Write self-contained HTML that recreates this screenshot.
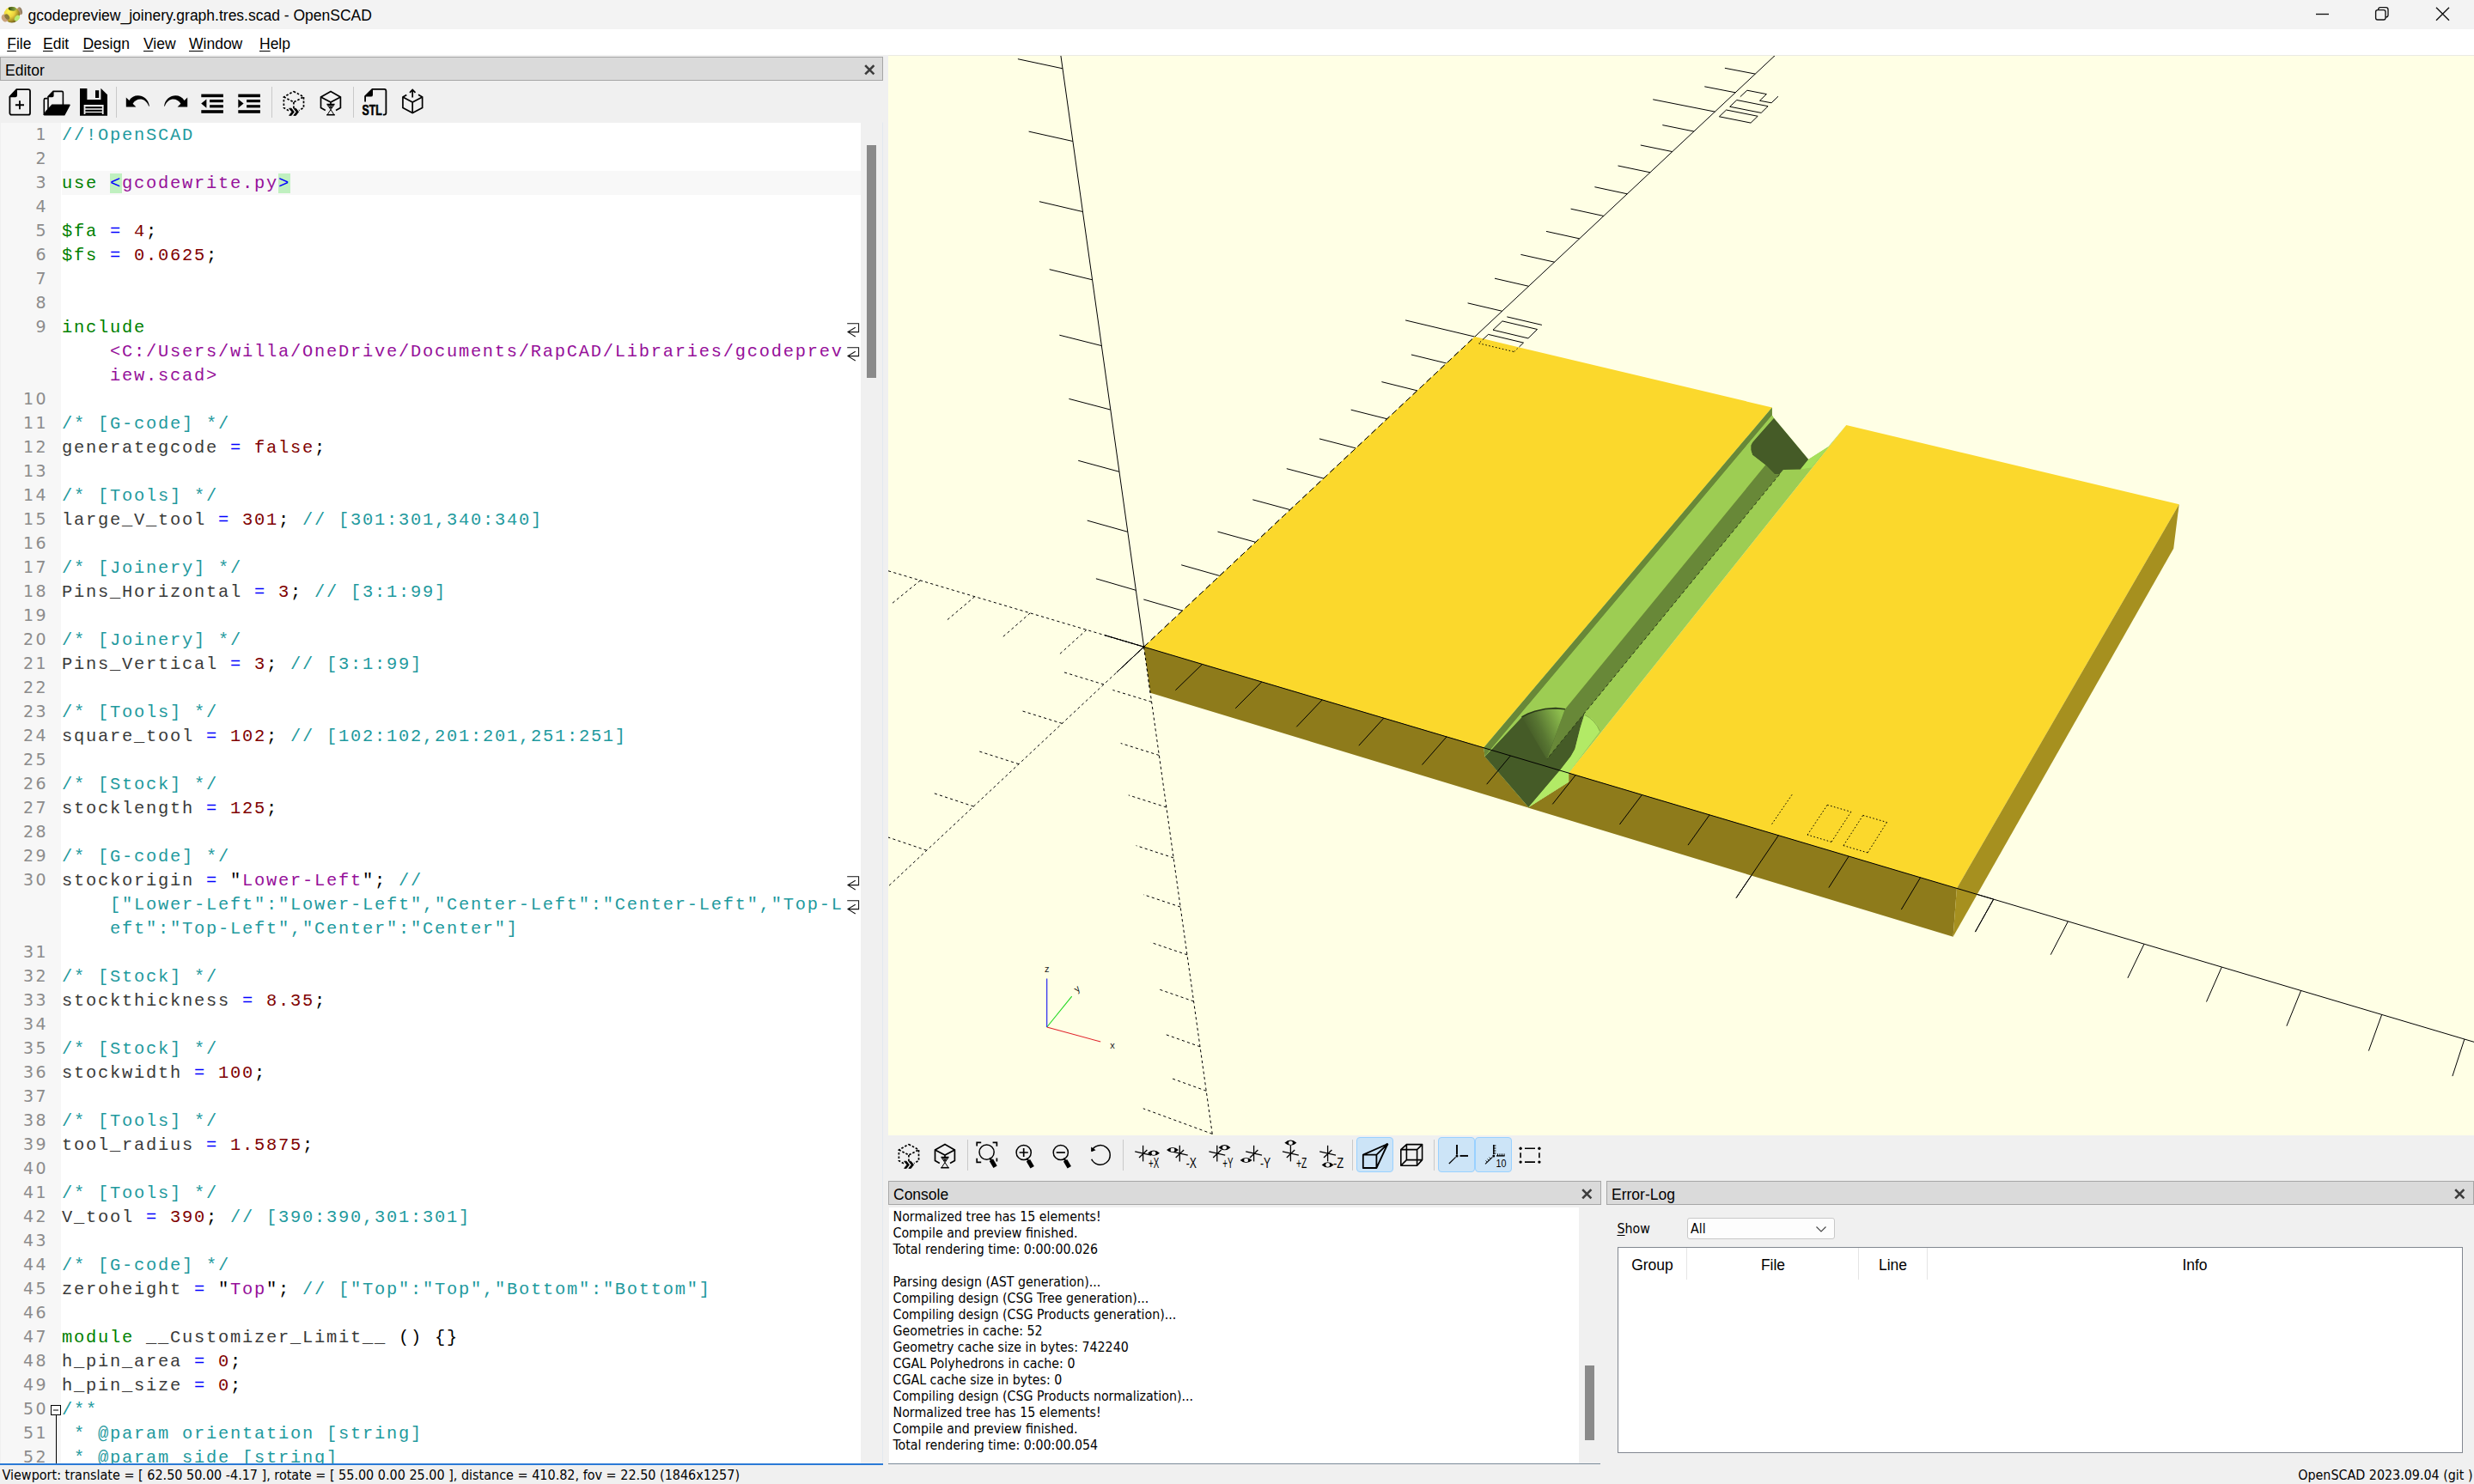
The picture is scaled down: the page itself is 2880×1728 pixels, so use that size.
<!DOCTYPE html><html><head><meta charset="utf-8"><title>gcodepreview_joinery.graph.tres.scad - OpenSCAD</title><style>
*{box-sizing:border-box;margin:0;padding:0}
html,body{width:2880px;height:1728px;overflow:hidden;background:#f0f0f0}
body{position:relative;font-family:"Liberation Sans",sans-serif;color:#000}
.abs{position:absolute}
.ui{font-family:"Liberation Sans",sans-serif;font-size:17.5px;line-height:22px;white-space:pre;color:#000}
.tah{font-family:"DejaVu Sans Condensed","DejaVu Sans","Liberation Sans",sans-serif;font-stretch:condensed;font-size:15.8px;white-space:pre;color:#000}
#title{left:0;top:0;width:2880px;height:34px;background:#f3f3f3}
#menu{left:0;top:34px;width:2880px;height:30px;background:#fff}
.dockt{background:#dadada;border:1px solid #a6a6a6;height:28px}
.dockt span{position:absolute;top:4px;font-size:17.5px;line-height:22px}
u{text-decoration:underline;text-underline-offset:2px;text-decoration-thickness:1px}
#ed{left:1px;top:143px;width:1001px;height:1561px;background:#fff;overflow:hidden}
#mg{left:0;top:0;width:70px;height:1561px;background:#f7f7f7}
.ln{position:absolute;left:0;width:55px;margin-top:-0.8px;letter-spacing:2.5px;transform:scaleX(0.94);transform-origin:52.5px 50%;text-align:right;height:28px;line-height:28px;font-family:"DejaVu Sans","Liberation Sans",sans-serif;font-size:20.2px;color:#8c8c8c}
.cl{position:absolute;left:71px;height:28px;line-height:28px;font-family:"Liberation Mono",monospace;font-size:20.4px;letter-spacing:1.76px;margin-top:0.6px;white-space:pre;color:#3a3a3a}
.c{color:#1f9a9e}.k{color:#008000}.p{color:#96109a}.n{color:#800000}.o{color:#0000ff}.d{color:#000}
.hl{background:#c0f0c0}
.con{left:1039.5px;height:19px;line-height:19px}
</style></head><body>
<div id="title" class="abs"><svg class="abs" style="left:0.0px;top:4.0px" width="28" height="26" viewBox="0 0 28 26" ><defs><radialGradient id="lg" cx="0.32" cy="0.3" r="0.85"><stop offset="0" stop-color="#fff74e"/><stop offset="0.42" stop-color="#ecd23e"/><stop offset="0.72" stop-color="#a38c26"/><stop offset="1" stop-color="#4a3e0c"/></radialGradient>
<linearGradient id="lh" x1="0" x2="1"><stop offset="0" stop-color="#33480f"/><stop offset="1" stop-color="#8fae48"/></linearGradient>
<linearGradient id="lt" x1="0" x2="1"><stop offset="0" stop-color="#d2a878"/><stop offset="1" stop-color="#857560"/></linearGradient></defs>
<ellipse cx="23.1" cy="8.8" rx="2.7" ry="4.6" fill="url(#lt)" transform="rotate(-18 23.1 8.8)"/>
<ellipse cx="13.8" cy="13.1" rx="9.2" ry="9.4" fill="url(#lg)"/>
<ellipse cx="14.3" cy="6.3" rx="4.6" ry="2.3" fill="url(#lh)" transform="rotate(6 14.3 6.3)"/>
<ellipse cx="19.9" cy="17" rx="2.6" ry="3.9" fill="#b9ea70" transform="rotate(38 19.9 17)"/>
<ellipse cx="5.6" cy="17" rx="3.7" ry="4.6" fill="#c9a27c" transform="rotate(-30 5.6 17)"/>
<ellipse cx="8.3" cy="15.6" rx="2.5" ry="3.6" fill="#8a7a3c" transform="rotate(-35 8.3 15.6)"/></svg><span class="abs ui" style="left:32.5px;top:7px">gcodepreview_joinery.graph.tres.scad - OpenSCAD</span><svg class="abs" style="left:2680px;top:0" width="200" height="34" viewBox="2680 0 200 34"><g fill="none" stroke="#111" stroke-width="1.35"><path d="M2696 16.5H2711"/><rect x="2765.6" y="11.6" width="11.4" height="11.4" rx="2.2"/><path d="M2768.6 11.4V11a2.4 2.4 0 0 1 2.4-2.4h6.4a2.6 2.6 0 0 1 2.6 2.6v6.4a2.4 2.4 0 0 1-2.4 2.4h-0.4"/><path d="M2836 8.8L2851 23.8M2851 8.8L2836 23.8"/></g></svg></div>
<div id="menu" class="abs">
<span class="abs ui" style="left:8.2px;top:6px"><u>F</u>ile</span>
<span class="abs ui" style="left:50.0px;top:6px"><u>E</u>dit</span>
<span class="abs ui" style="left:96.4px;top:6px"><u>D</u>esign</span>
<span class="abs ui" style="left:167.0px;top:6px"><u>V</u>iew</span>
<span class="abs ui" style="left:220.0px;top:6px"><u>W</u>indow</span>
<span class="abs ui" style="left:302.0px;top:6px"><u>H</u>elp</span>
</div>
<div class="abs dockt" style="left:0;top:66px;width:1028px"><span class="ui" style="left:5px">Editor</span><svg class="abs" style="left:1005px;top:8px" width="13" height="13" viewBox="0 0 13 13"><path d="M1.2 1.2L11.4 11.4M11.4 1.2L1.2 11.4" stroke="#3c3c3c" stroke-width="2.6" fill="none"/></svg></div>
<svg class="abs" style="left:7.0px;top:103.0px" width="32" height="32" viewBox="0 0 32 32" ><path d="M12.3 1.2H26a2 2 0 0 1 2 2V28.7a2 2 0 0 1-2 2H6.4a2 2 0 0 1-2-2V9.6Z" fill="none" stroke="#000" stroke-width="1.8"/><path d="M3.6 10.2L13 0.4V8a2.2 2.2 0 0 1-2.2 2.2Z" fill="#000"/><path d="M10.9 19.2H21M15.95 14.2V24.3" stroke="#000" stroke-width="1.9" fill="none"/></svg>
<svg class="abs" style="left:49.7px;top:103.0px" width="32" height="32" viewBox="0 0 32 32" ><path d="M1.3 31V13.2a1.6 1.6 0 0 1 1.6-1.6H5.5" fill="none" stroke="#000" stroke-width="1.6"/><path d="M6 27V9.6L12 3.4H22a1.4 1.4 0 0 1 1.4 1.4V19" fill="none" stroke="#000" stroke-width="1.6"/><path d="M5.4 10.2L12.6 2.8V8.4a1.8 1.8 0 0 1-1.8 1.8Z" fill="#000"/><path d="M10.4 18.4H30.8a0.9 0.9 0 0 1 0.8 1.3L25.6 31a1 1 0 0 1-0.9 0.5H1.6a0.8 0.8 0 0 1-0.7-1.2L3 26.5Z" fill="#000"/></svg>
<svg class="abs" style="left:93.0px;top:103.0px" width="32" height="32" viewBox="0 0 32 32" ><path d="M0 0H24.6L32 7.2V31.8H0Z" fill="#000"/><rect x="8.4" y="0" width="16" height="13" fill="#f0f0f0"/><rect x="18" y="2.2" width="4.2" height="8.8" fill="#000"/><rect x="4.6" y="19" width="23" height="11" fill="#f0f0f0"/><rect x="6.4" y="21.2" width="19.4" height="2" fill="#000"/><rect x="6.4" y="24.8" width="19.4" height="2" fill="#000"/><rect x="6.4" y="28.2" width="19.4" height="2" fill="#000"/></svg>
<svg class="abs" style="left:145.0px;top:103.0px" width="32" height="32" viewBox="0 0 32 32" ><path d="M1.8 10.6V21.4H13.4L9.6 17.8C13.5 10.6 24.5 10 28.2 20.8L28.9 20.4C26.8 6.4 10.6 4.6 5.4 14Z" fill="#000"/></svg>
<svg class="abs" style="left:187.6px;top:103.0px" width="32" height="32" viewBox="0 0 32 32" ><g transform="translate(32 0) scale(-1 1)"><path d="M1.8 10.6V21.4H13.4L9.6 17.8C13.5 10.6 24.5 10 28.2 20.8L28.9 20.4C26.8 6.4 10.6 4.6 5.4 14Z" fill="#000"/></g></svg>
<svg class="abs" style="left:230.8px;top:103.0px" width="32" height="32" viewBox="0 0 32 32" ><rect x="3.3" y="6.6" width="25.6" height="3.6" fill="#000"/><rect x="13.1" y="13" width="15.799999999999999" height="3.2" fill="#000"/><rect x="13.1" y="19.2" width="15.799999999999999" height="3.2" fill="#000"/><rect x="3.3" y="25.2" width="25.6" height="3.6" fill="#000"/><path d="M3.2 17.6L9.4 12.4V22.8Z" fill="#000"/></svg>
<svg class="abs" style="left:274.0px;top:103.0px" width="32" height="32" viewBox="0 0 32 32" ><rect x="3.3" y="6.6" width="25.6" height="3.6" fill="#000"/><rect x="13.1" y="13" width="15.799999999999999" height="3.2" fill="#000"/><rect x="13.1" y="19.2" width="15.799999999999999" height="3.2" fill="#000"/><rect x="3.3" y="25.2" width="25.6" height="3.6" fill="#000"/><path d="M9.6 17.6L3.3 12.4V22.8Z" fill="#000"/></svg>
<svg class="abs" style="left:326.0px;top:103.0px" width="32" height="32" viewBox="0 0 32 32" ><g fill="none" stroke="#000" stroke-width="1.7" stroke-dasharray="2.6 1.9"><path d="M15.9 3.4L27.5 9.9V22.5L22 25.6M10 25.8L4.4 22.5V9.9L15.9 3.4"/><path d="M4.4 9.9L15.9 16L27.5 9.9M15.9 16V24"/></g><path d="M10.6 23.2H13.2L16.4 27.3L13.2 31.4H10.6L13.8 27.3ZM15.8 23.2H18.4L21.6 27.3L18.4 31.4H15.8L19 27.3Z" fill="#000" stroke="#000" stroke-width="0.8"/></svg>
<svg class="abs" style="left:369.0px;top:103.0px" width="32" height="32" viewBox="0 0 32 32" ><g fill="none" stroke="#000" stroke-width="1.7"><path d="M9.8 25.6L4.5 22.5V9.9L16 3.4L27.4 9.9V22.5L22 25.6"/><path d="M4.5 9.9L16 16L27.4 9.9M16 16V18.4"/></g><path d="M11.4 18.6H20.6M11.2 30.8H20.8" stroke="#000" stroke-width="1.5"/><path d="M12.4 19.6H19.6L16 24.6ZM16 24.6L19.8 30.4H12.2Z" fill="none" stroke="#000" stroke-width="1"/><path d="M13.6 20.4H18.4L16 23.6Z" fill="#000"/></svg>
<svg class="abs" style="left:419.7px;top:103.0px" width="32" height="32" viewBox="0 0 32 32" ><path d="M5.1 15.4V9.2L13.4 0.9H27.4a2 2 0 0 1 2 2V28.6a2 2 0 0 1-2 2H25.8" fill="none" stroke="#000" stroke-width="1.8"/><path d="M4.6 9.6L14 0.4V7.4a2.2 2.2 0 0 1-2.2 2.2Z" fill="#000"/><text x="1.6" y="31.2" font-family="Liberation Sans, sans-serif" font-weight="bold" font-size="16" textLength="23.2" lengthAdjust="spacingAndGlyphs" fill="#000" stroke="#000" stroke-width="0.55">STL</text></svg>
<svg class="abs" style="left:464.5px;top:103.0px" width="32" height="32" viewBox="0 0 32 32" ><g fill="none" stroke="#000" stroke-width="1.7"><path d="M8.3 7.4L3.95 9.9V22.5L15.2 28.6L26.65 22.5V9.9L22 7.3"/><path d="M3.95 9.9L15.2 16L26.65 9.9M15.2 16V28.6"/><path d="M15.2 10.6V1.6M12 4.8L15.2 1.4L18.5 4.8"/></g></svg>
<div class="abs" style="left:135.1px;top:101px;width:1px;height:36px;background:#c9c9c9"></div>
<div class="abs" style="left:316.0px;top:101px;width:1px;height:36px;background:#c9c9c9"></div>
<div class="abs" style="left:410.9px;top:101px;width:1px;height:36px;background:#c9c9c9"></div>
<div class="abs" style="left:0;top:142px;width:1028px;height:1563px;border:1px solid #e3e9ef;border-top-color:#f0f0f0;border-left-color:#f0f0f0"></div>
<div id="ed" class="abs"><div id="mg" class="abs"></div>
<div class="abs" style="left:71px;top:56px;width:930px;height:28px;background:#f8f8f8"></div>
<div class="ln" style="top:0px">1</div>
<div class="cl" style="top:0px"><span class="c">//!OpenSCAD</span></div>
<div class="ln" style="top:28px">2</div>
<div class="ln" style="top:56px">3</div>
<div class="cl" style="top:56px"><span class="k">use</span> <span class="o hl">&lt;</span><span class="p">gcodewrite.py</span><span class="o hl">&gt;</span></div>
<div class="ln" style="top:84px">4</div>
<div class="ln" style="top:112px">5</div>
<div class="cl" style="top:112px"><span class="k">$fa</span> <span class="o">=</span> <span class="n">4</span><span class="d">;</span></div>
<div class="ln" style="top:140px">6</div>
<div class="cl" style="top:140px"><span class="k">$fs</span> <span class="o">=</span> <span class="n">0.0625</span><span class="d">;</span></div>
<div class="ln" style="top:168px">7</div>
<div class="ln" style="top:196px">8</div>
<div class="ln" style="top:224px">9</div>
<div class="cl" style="top:224px"><span class="k">include</span></div>
<svg class="abs" style="left:984px;top:233px" width="16" height="18" viewBox="0 0 16 18"><path d="M1.2 0.8H14.6V10.6H2.2M10.8 5.3L2 10.6L10.8 16" fill="none" stroke="#111" stroke-width="1.05"/></svg>
<div class="cl" style="top:252px"><span class="p">    &lt;C:/Users/willa/OneDrive/Documents/RapCAD/Libraries/gcodeprev</span></div>
<svg class="abs" style="left:984px;top:261px" width="16" height="18" viewBox="0 0 16 18"><path d="M1.2 0.8H14.6V10.6H2.2M10.8 5.3L2 10.6L10.8 16" fill="none" stroke="#111" stroke-width="1.05"/></svg>
<div class="cl" style="top:280px"><span class="p">    iew.scad&gt;</span></div>
<div class="ln" style="top:308px">10</div>
<div class="ln" style="top:336px">11</div>
<div class="cl" style="top:336px"><span class="c">/* [G-code] */</span></div>
<div class="ln" style="top:364px">12</div>
<div class="cl" style="top:364px">generategcode <span class="o">=</span> <span class="n">false</span><span class="d">;</span></div>
<div class="ln" style="top:392px">13</div>
<div class="ln" style="top:420px">14</div>
<div class="cl" style="top:420px"><span class="c">/* [Tools] */</span></div>
<div class="ln" style="top:448px">15</div>
<div class="cl" style="top:448px">large_V_tool <span class="o">=</span> <span class="n">301</span><span class="d">;</span> <span class="c">// [301:301,340:340]</span></div>
<div class="ln" style="top:476px">16</div>
<div class="ln" style="top:504px">17</div>
<div class="cl" style="top:504px"><span class="c">/* [Joinery] */</span></div>
<div class="ln" style="top:532px">18</div>
<div class="cl" style="top:532px">Pins_Horizontal <span class="o">=</span> <span class="n">3</span><span class="d">;</span> <span class="c">// [3:1:99]</span></div>
<div class="ln" style="top:560px">19</div>
<div class="ln" style="top:588px">20</div>
<div class="cl" style="top:588px"><span class="c">/* [Joinery] */</span></div>
<div class="ln" style="top:616px">21</div>
<div class="cl" style="top:616px">Pins_Vertical <span class="o">=</span> <span class="n">3</span><span class="d">;</span> <span class="c">// [3:1:99]</span></div>
<div class="ln" style="top:644px">22</div>
<div class="ln" style="top:672px">23</div>
<div class="cl" style="top:672px"><span class="c">/* [Tools] */</span></div>
<div class="ln" style="top:700px">24</div>
<div class="cl" style="top:700px">square_tool <span class="o">=</span> <span class="n">102</span><span class="d">;</span> <span class="c">// [102:102,201:201,251:251]</span></div>
<div class="ln" style="top:728px">25</div>
<div class="ln" style="top:756px">26</div>
<div class="cl" style="top:756px"><span class="c">/* [Stock] */</span></div>
<div class="ln" style="top:784px">27</div>
<div class="cl" style="top:784px">stocklength <span class="o">=</span> <span class="n">125</span><span class="d">;</span></div>
<div class="ln" style="top:812px">28</div>
<div class="ln" style="top:840px">29</div>
<div class="cl" style="top:840px"><span class="c">/* [G-code] */</span></div>
<div class="ln" style="top:868px">30</div>
<div class="cl" style="top:868px">stockorigin <span class="o">=</span> <span class="d">"</span><span class="p">Lower-Left</span><span class="d">";</span> <span class="c">//</span></div>
<svg class="abs" style="left:984px;top:877px" width="16" height="18" viewBox="0 0 16 18"><path d="M1.2 0.8H14.6V10.6H2.2M10.8 5.3L2 10.6L10.8 16" fill="none" stroke="#111" stroke-width="1.05"/></svg>
<div class="cl" style="top:896px"><span class="c">    ["Lower-Left":"Lower-Left","Center-Left":"Center-Left","Top-L</span></div>
<svg class="abs" style="left:984px;top:905px" width="16" height="18" viewBox="0 0 16 18"><path d="M1.2 0.8H14.6V10.6H2.2M10.8 5.3L2 10.6L10.8 16" fill="none" stroke="#111" stroke-width="1.05"/></svg>
<div class="cl" style="top:924px"><span class="c">    eft":"Top-Left","Center":"Center"]</span></div>
<div class="ln" style="top:952px">31</div>
<div class="ln" style="top:980px">32</div>
<div class="cl" style="top:980px"><span class="c">/* [Stock] */</span></div>
<div class="ln" style="top:1008px">33</div>
<div class="cl" style="top:1008px">stockthickness <span class="o">=</span> <span class="n">8.35</span><span class="d">;</span></div>
<div class="ln" style="top:1036px">34</div>
<div class="ln" style="top:1064px">35</div>
<div class="cl" style="top:1064px"><span class="c">/* [Stock] */</span></div>
<div class="ln" style="top:1092px">36</div>
<div class="cl" style="top:1092px">stockwidth <span class="o">=</span> <span class="n">100</span><span class="d">;</span></div>
<div class="ln" style="top:1120px">37</div>
<div class="ln" style="top:1148px">38</div>
<div class="cl" style="top:1148px"><span class="c">/* [Tools] */</span></div>
<div class="ln" style="top:1176px">39</div>
<div class="cl" style="top:1176px">tool_radius <span class="o">=</span> <span class="n">1.5875</span><span class="d">;</span></div>
<div class="ln" style="top:1204px">40</div>
<div class="ln" style="top:1232px">41</div>
<div class="cl" style="top:1232px"><span class="c">/* [Tools] */</span></div>
<div class="ln" style="top:1260px">42</div>
<div class="cl" style="top:1260px">V_tool <span class="o">=</span> <span class="n">390</span><span class="d">;</span> <span class="c">// [390:390,301:301]</span></div>
<div class="ln" style="top:1288px">43</div>
<div class="ln" style="top:1316px">44</div>
<div class="cl" style="top:1316px"><span class="c">/* [G-code] */</span></div>
<div class="ln" style="top:1344px">45</div>
<div class="cl" style="top:1344px">zeroheight <span class="o">=</span> <span class="d">"</span><span class="p">Top</span><span class="d">";</span> <span class="c">// ["Top":"Top","Bottom":"Bottom"]</span></div>
<div class="ln" style="top:1372px">46</div>
<div class="ln" style="top:1400px">47</div>
<div class="cl" style="top:1400px"><span class="k">module</span> __Customizer_Limit__ <span class="d">() {}</span></div>
<div class="ln" style="top:1428px">48</div>
<div class="cl" style="top:1428px">h_pin_area <span class="o">=</span> <span class="n">0</span><span class="d">;</span></div>
<div class="ln" style="top:1456px">49</div>
<div class="cl" style="top:1456px">h_pin_size <span class="o">=</span> <span class="n">0</span><span class="d">;</span></div>
<div class="ln" style="top:1484px">50</div>
<div class="cl" style="top:1484px"><span class="c">/**</span></div>
<div class="ln" style="top:1512px">51</div>
<div class="cl" style="top:1512px"><span class="c"> * @param orientation [string]</span></div>
<div class="ln" style="top:1540px">52</div>
<div class="cl" style="top:1540px"><span class="c"> * @param side [string]</span></div>
<div class="abs" style="left:64px;top:1505px;width:1px;height:120px;background:#000"></div>
<svg class="abs" style="left:58px;top:1493px" width="13" height="13" viewBox="0 0 13 13"><rect x="0.5" y="0.5" width="11" height="11" fill="#fff" stroke="#000" stroke-width="1"/><path d="M3 6H9" stroke="#000" stroke-width="1"/></svg>
</div>
<div class="abs" style="left:1002px;top:143px;width:25px;height:1561px;background:#f0f0f0"></div>
<div class="abs" style="left:1009px;top:169px;width:11px;height:271px;background:#8a8a8a"></div>
<div class="abs" style="left:0;top:1704px;width:1028px;height:1.5px;background:#2a7ad6"></div>
<div class="abs" style="left:1034px;top:64px;width:1846px;height:1px;background:#e9e9e4"></div>
<svg width="1846" height="1257" viewBox="1034 65 1846 1257" style="position:absolute;left:1034px;top:65px;background:#ffffe5" shape-rendering="auto">
<defs><linearGradient id="cone" gradientUnits="userSpaceOnUse" x1="1782" y1="860" x2="1822" y2="842"><stop offset="0" stop-color="#455b27"/><stop offset="0.35" stop-color="#587632"/><stop offset="1" stop-color="#8dbd4d"/></linearGradient></defs>
<g stroke="#000" stroke-width="1" fill="none" stroke-linecap="butt">
<line x1="1331.6" y1="753.2" x2="5669.0" y2="2042.1"/>
<line x1="1331.6" y1="753.2" x2="1716.8" y2="392.1" stroke-dasharray="7 4"/>
<line x1="1716.8" y1="392.1" x2="2390.9" y2="-239.7"/>
<line x1="1331.6" y1="753.2" x2="1230.9" y2="36.3"/>
<line x1="1331.6" y1="753.2" x2="-700.5" y2="149.4" stroke-dasharray="3.2 3.2"/>
<line x1="1331.6" y1="753.2" x2="-7074.6" y2="8632.5" stroke-dasharray="3.2 3.2"/>
<line x1="1331.6" y1="753.2" x2="1414.7" y2="1345.0" stroke-dasharray="3.2 3.2"/>
<line x1="1331.6" y1="753.2" x2="1299.8" y2="783.0"/>
<line x1="1331.6" y1="753.2" x2="1285.8" y2="739.6"/>
<line x1="1331.6" y1="753.2" x2="1285.8" y2="739.6"/>
<line x1="1399.6" y1="773.4" x2="1368.4" y2="803.7"/>
<line x1="1376.6" y1="711.1" x2="1331.3" y2="698.0"/>
<line x1="1322.3" y1="687.3" x2="1275.9" y2="673.8"/>
<line x1="1264.8" y1="733.4" x2="1232.5" y2="762.6" stroke-dasharray="3.2 3.2"/>
<line x1="1284.9" y1="797.0" x2="1238.5" y2="782.8" stroke-dasharray="3.2 3.2"/>
<line x1="1340.6" y1="817.3" x2="1295.4" y2="803.5" stroke-dasharray="3.2 3.2"/>
<line x1="1468.8" y1="794.0" x2="1438.2" y2="824.8"/>
<line x1="1419.9" y1="670.5" x2="1375.2" y2="657.8"/>
<line x1="1312.8" y1="619.3" x2="1265.7" y2="606.1"/>
<line x1="1199.2" y1="713.9" x2="1166.3" y2="742.6" stroke-dasharray="3.2 3.2"/>
<line x1="1236.4" y1="842.4" x2="1189.4" y2="827.7" stroke-dasharray="3.2 3.2"/>
<line x1="1349.3" y1="879.5" x2="1304.7" y2="865.5" stroke-dasharray="3.2 3.2"/>
<line x1="1539.2" y1="814.9" x2="1509.3" y2="846.3"/>
<line x1="1461.6" y1="631.3" x2="1417.5" y2="619.1"/>
<line x1="1303.0" y1="549.3" x2="1255.2" y2="536.3"/>
<line x1="1134.7" y1="694.7" x2="1101.3" y2="723.0" stroke-dasharray="3.2 3.2"/>
<line x1="1186.0" y1="889.7" x2="1138.3" y2="874.4" stroke-dasharray="3.2 3.2"/>
<line x1="1357.8" y1="940.0" x2="1313.8" y2="925.9" stroke-dasharray="3.2 3.2"/>
<line x1="1610.9" y1="836.2" x2="1581.8" y2="868.2"/>
<line x1="1501.9" y1="593.6" x2="1458.3" y2="581.8"/>
<line x1="1292.8" y1="477.1" x2="1244.4" y2="464.4"/>
<line x1="1071.3" y1="675.9" x2="1037.3" y2="703.6" stroke-dasharray="3.2 3.2"/>
<line x1="1133.4" y1="939.0" x2="1085.1" y2="923.0" stroke-dasharray="3.2 3.2"/>
<line x1="1366.1" y1="998.9" x2="1322.6" y2="984.6" stroke-dasharray="3.2 3.2"/>
<line x1="1684.0" y1="857.9" x2="1655.5" y2="890.5"/>
<line x1="1540.8" y1="557.1" x2="1497.8" y2="545.7"/>
<line x1="1282.4" y1="402.6" x2="1233.3" y2="390.2"/>
<line x1="1009.0" y1="657.3" x2="974.5" y2="684.6" stroke-dasharray="3.2 3.2"/>
<line x1="1078.7" y1="990.2" x2="1029.8" y2="973.6" stroke-dasharray="3.2 3.2"/>
<line x1="1374.1" y1="1056.1" x2="1331.2" y2="1041.7" stroke-dasharray="3.2 3.2"/>
<line x1="1758.4" y1="880.0" x2="1730.7" y2="913.2"/>
<line x1="1578.4" y1="521.9" x2="1535.9" y2="510.9"/>
<line x1="1271.6" y1="325.8" x2="1221.7" y2="313.7"/>
<line x1="947.7" y1="639.1" x2="912.8" y2="666.0" stroke-dasharray="3.2 3.2"/>
<line x1="1021.7" y1="1043.7" x2="972.1" y2="1026.4" stroke-dasharray="3.2 3.2"/>
<line x1="1382.0" y1="1111.8" x2="1339.5" y2="1097.3" stroke-dasharray="3.2 3.2"/>
<line x1="1834.2" y1="902.5" x2="1807.3" y2="936.4"/>
<line x1="1614.8" y1="487.8" x2="1572.7" y2="477.2"/>
<line x1="1260.4" y1="246.5" x2="1209.9" y2="234.7"/>
<line x1="887.4" y1="621.2" x2="852.1" y2="647.6" stroke-dasharray="3.2 3.2"/>
<line x1="962.2" y1="1099.5" x2="911.9" y2="1081.4" stroke-dasharray="3.2 3.2"/>
<line x1="1389.6" y1="1166.0" x2="1347.6" y2="1151.4" stroke-dasharray="3.2 3.2"/>
<line x1="1911.4" y1="925.5" x2="1885.4" y2="960.0"/>
<line x1="1649.9" y1="454.9" x2="1608.4" y2="444.6"/>
<line x1="1248.9" y1="164.5" x2="1197.6" y2="153.1"/>
<line x1="828.2" y1="603.6" x2="792.3" y2="629.6" stroke-dasharray="3.2 3.2"/>
<line x1="900.0" y1="1157.8" x2="849.1" y2="1138.9" stroke-dasharray="3.2 3.2"/>
<line x1="1397.0" y1="1218.8" x2="1355.6" y2="1204.1" stroke-dasharray="3.2 3.2"/>
<line x1="1990.1" y1="948.9" x2="1965.0" y2="984.1"/>
<line x1="1683.9" y1="423.0" x2="1642.9" y2="413.0"/>
<line x1="1237.0" y1="79.8" x2="1184.9" y2="68.7"/>
<line x1="769.8" y1="586.3" x2="733.6" y2="611.8" stroke-dasharray="3.2 3.2"/>
<line x1="835.0" y1="1218.7" x2="783.4" y2="1199.0" stroke-dasharray="3.2 3.2"/>
<line x1="1404.2" y1="1270.3" x2="1363.3" y2="1255.5" stroke-dasharray="3.2 3.2"/>
<line x1="2070.4" y1="972.7" x2="2021.1" y2="1045.5"/>
<line x1="1716.8" y1="392.1" x2="1636.1" y2="372.9"/>
<line x1="712.5" y1="569.2" x2="638.4" y2="620.1" stroke-dasharray="3.2 3.2"/>
<line x1="766.9" y1="1282.5" x2="663.1" y2="1241.4" stroke-dasharray="3.2 3.2"/>
<line x1="1411.3" y1="1320.4" x2="1330.8" y2="1290.8" stroke-dasharray="3.2 3.2"/>
<line x1="2152.2" y1="997.0" x2="2128.9" y2="1033.6"/>
<line x1="1748.7" y1="362.3" x2="1708.6" y2="352.9"/>
<line x1="656.0" y1="552.5" x2="619.1" y2="577.2" stroke-dasharray="3.2 3.2"/>
<line x1="695.7" y1="1349.3" x2="642.7" y2="1327.6" stroke-dasharray="3.2 3.2"/>
<line x1="2235.6" y1="1021.8" x2="2213.3" y2="1059.1"/>
<line x1="1779.6" y1="333.3" x2="1740.0" y2="324.2"/>
<line x1="620.9" y1="1419.4" x2="567.2" y2="1396.6" stroke-dasharray="3.2 3.2"/>
<line x1="2320.7" y1="1047.1" x2="2299.4" y2="1085.1"/>
<line x1="1809.6" y1="305.2" x2="1770.4" y2="296.4"/>
<line x1="2407.4" y1="1072.9" x2="2387.2" y2="1111.7"/>
<line x1="1838.7" y1="277.9" x2="1800.0" y2="269.4"/>
<line x1="2496.0" y1="1099.2" x2="2476.9" y2="1138.8"/>
<line x1="1866.9" y1="251.5" x2="1828.6" y2="243.2"/>
<line x1="2586.3" y1="1126.1" x2="2568.5" y2="1166.5"/>
<line x1="1894.3" y1="225.8" x2="1856.4" y2="217.7"/>
<line x1="2678.6" y1="1153.5" x2="2661.9" y2="1194.7"/>
<line x1="1920.9" y1="200.8" x2="1883.5" y2="193.0"/>
<line x1="2772.7" y1="1181.4" x2="2757.4" y2="1223.6"/>
<line x1="1946.8" y1="176.6" x2="1909.8" y2="169.0"/>
<line x1="2868.9" y1="1210.0" x2="2854.9" y2="1253.1"/>
<line x1="1971.9" y1="153.0" x2="1935.3" y2="145.6"/>
<line x1="2967.1" y1="1239.2" x2="2941.6" y2="1328.6"/>
<line x1="1996.4" y1="130.1" x2="1924.2" y2="115.8"/>
<line x1="3067.5" y1="1269.0" x2="3056.4" y2="1314.0"/>
<line x1="2020.2" y1="107.8" x2="1984.3" y2="100.8"/>
<line x1="3170.0" y1="1299.5" x2="3160.4" y2="1345.4"/>
<line x1="2043.3" y1="86.1" x2="2007.9" y2="79.3"/>
<line x1="3274.8" y1="1330.6" x2="3266.9" y2="1377.6"/>
<line x1="2065.9" y1="64.9" x2="2030.8" y2="58.3"/>
<line x1="3381.9" y1="1362.5" x2="3375.7" y2="1410.5"/>
<line x1="2087.9" y1="44.4" x2="2053.1" y2="37.9"/>
<line x1="3491.5" y1="1395.0" x2="3487.0" y2="1444.2"/>
<line x1="2109.3" y1="24.3" x2="2074.9" y2="18.0"/>
<line x1="3603.6" y1="1428.3" x2="3601.0" y2="1478.6"/>
<line x1="2130.1" y1="4.7" x2="2096.1" y2="-1.4"/>
<line x1="3718.2" y1="1462.4" x2="3717.6" y2="1513.9"/>
<line x1="2150.5" y1="-14.3" x2="2116.8" y2="-20.3"/>
<line x1="3835.6" y1="1497.3" x2="3837.0" y2="1550.0"/>
<line x1="2170.3" y1="-32.9" x2="2136.9" y2="-38.8"/>
<line x1="3955.7" y1="1532.9" x2="3959.2" y2="1586.9"/>
<line x1="2189.6" y1="-51.1" x2="2156.6" y2="-56.8"/>
<line x1="4078.7" y1="1569.5" x2="4090.4" y2="1682.1"/>
<line x1="2208.5" y1="-68.8" x2="2143.4" y2="-79.8"/>
<line x1="4204.6" y1="1606.9" x2="4212.8" y2="1663.6"/>
<line x1="2227.0" y1="-86.0" x2="2194.6" y2="-91.5"/>
<line x1="4333.7" y1="1645.3" x2="4344.3" y2="1703.3"/>
<line x1="2245.0" y1="-102.9" x2="2212.9" y2="-108.2"/>
<line x1="2262.5" y1="-119.4" x2="2230.8" y2="-124.6"/>
<line x1="2279.7" y1="-135.5" x2="2248.3" y2="-140.5"/>
<line x1="2296.5" y1="-151.2" x2="2265.3" y2="-156.2"/>
<line x1="2312.9" y1="-166.6" x2="2282.0" y2="-171.4"/>
<line x1="2329.0" y1="-181.6" x2="2298.4" y2="-186.4"/>
<line x1="2344.6" y1="-196.3" x2="2314.3" y2="-201.0"/>
<line x1="2360.0" y1="-210.7" x2="2330.0" y2="-215.3"/>
<line x1="2375.0" y1="-224.8" x2="2315.7" y2="-233.6"/>
<line x1="2389.7" y1="-238.6" x2="2360.2" y2="-242.9"/>
</g>
<polygon fill="#fbd82c" points="1331.6,753.2 1727.3,870.4 2062.9,474.5 1716.8,392.1"/>
<polygon fill="#fbd82c" points="1826.1,900.0 2277.9,1034.4 2536.7,587.2 2149.3,495.0"/>
<polygon fill="#8e7b1b" points="1331.6,753.2 1727.3,870.4 1728.5,880.7 1779.4,940.1 1826.1,910.4 1826.1,900.0 2277.9,1034.4 2273.6,1090.8 1339.1,806.8"/>
<polygon fill="#a6901f" points="2277.9,1034.4 2536.7,587.2 2530.2,638.8 2273.6,1090.8"/>
<polygon fill="#9dcd53" points="1727.3,870.4 2062.9,474.5 2062.9,483.6 2064.9,486.7 2105.2,534.9 2128.3,520.3 2149.3,495.0 1826.1,900.0 1826.1,910.4 1779.4,940.1 1728.5,880.7"/>
<polygon fill="#455b27" points="2064.9,486.7 2105.2,534.9 2095.8,546.7 2076.1,547.0 2071.5,552.5 2066.1,552.5 2055.2,541.6 2040.0,529.7 2038.2,524.0 2038.2,518.5 2040.0,514.9"/>
<polygon fill="#a6e05b" points="2105.2,534.9 2128.3,520.3 2108.9,544.5 2095.8,546.7"/>
<polygon fill="#688838" points="1727.3,870.4 2062.9,474.5 2062.9,483.6 1728.5,880.7"/>
<polygon fill="#455b27" points="1728.5,881.0 1771.5,834.9 1778.5,831.2 1786.7,828.2 1798.8,825.5 1811.0,824.6 1821.9,825.8 1844.3,832.2 1839.5,848.0 1833.4,872.2 1828.6,880.7 1816.4,896.4 1779.4,940.1"/>
<polygon fill="#b2ea66" points="1844.3,832.2 1852.8,836.4 1858.9,843.0 1862.5,851.6 1826.1,900.0 1826.1,910.4 1779.4,940.1 1816.4,896.4 1828.6,880.7 1833.4,872.2 1839.5,848.0"/>
<polygon fill="#9dcd53" points="1728.5,881.0 2062.9,483.6 2064.9,486.7 2040.0,514.9 2038.2,518.5 2038.2,524.0 2040.0,529.7 2055.2,541.6 1821.9,825.8 1811.0,824.6 1798.8,825.5 1786.7,828.2 1778.5,831.2 1771.5,834.9"/>
<polygon fill="#688838" points="1821.9,825.8 2055.2,541.6 2066.1,552.5 2071.5,552.5 1800.7,884.0"/>
<polygon fill="#9dcd53" points="2071.5,552.5 2076.1,547.0 2095.8,546.7 2108.9,544.5 1862.5,851.6 1858.9,843.0 1852.8,836.4 1844.3,832.2"/>
<line x1="2071.5" y1="552.5" x2="1800.7" y2="884.0" stroke="#2c3c18" stroke-width="1" stroke-dasharray="4 3"/>
<polygon fill="url(#cone)" points="1771.5,834.9 1778.5,831.2 1786.7,828.2 1798.8,825.5 1811.0,824.6 1821.9,825.8 1800.7,884.0"/>
<polyline fill="none" stroke="#2a3818" stroke-width="1.6" points="1771.5,834.9 1778.5,831.2 1786.7,828.2 1798.8,825.5 1811.0,824.6 1821.9,825.8"/>
<path d="M1844.3 832.2 Q1857 838 1862.5 851.6" fill="none" stroke="#86b04a" stroke-width="1"/>
<g stroke="#000" stroke-width="1" fill="none">
<line x1="1331.6" y1="753.2" x2="2320.7" y2="1047.1"/>
<line x1="1331.6" y1="753.2" x2="1716.8" y2="392.1" stroke-dasharray="7 4"/>
<line x1="1331.6" y1="753.2" x2="1339.1" y2="806.8" stroke-dasharray="3.2 3.2"/>
<line x1="1331.6" y1="753.2" x2="1299.8" y2="783.0"/>
<line x1="1399.6" y1="773.4" x2="1368.4" y2="803.7"/>
<line x1="1468.8" y1="794.0" x2="1438.2" y2="824.8"/>
<line x1="1539.2" y1="814.9" x2="1509.3" y2="846.3"/>
<line x1="1610.9" y1="836.2" x2="1581.8" y2="868.2"/>
<line x1="1684.0" y1="857.9" x2="1655.5" y2="890.5"/>
<line x1="1758.4" y1="880.0" x2="1730.7" y2="913.2"/>
<line x1="1834.2" y1="902.5" x2="1807.3" y2="936.4"/>
<line x1="1911.4" y1="925.5" x2="1885.4" y2="960.0"/>
<line x1="1990.1" y1="948.9" x2="1965.0" y2="984.1"/>
<line x1="2070.4" y1="972.7" x2="2021.1" y2="1045.5"/>
<line x1="2152.2" y1="997.0" x2="2128.9" y2="1033.6"/>
<line x1="2235.6" y1="1021.8" x2="2213.3" y2="1059.1"/>
<line x1="2320.7" y1="1047.1" x2="2299.4" y2="1085.1"/>
<line x1="2086.1" y1="925.3" x2="2062.5" y2="959.8" stroke-dasharray="1.6 2.4"/>
<line x1="2127.2" y1="937.3" x2="2154.8" y2="945.3" stroke-dasharray="1.6 2.4"/>
<line x1="2154.8" y1="945.3" x2="2132.0" y2="980.4" stroke-dasharray="1.6 2.4"/>
<line x1="2132.0" y1="980.4" x2="2104.1" y2="972.1" stroke-dasharray="1.6 2.4"/>
<line x1="2104.1" y1="972.1" x2="2127.2" y2="937.3" stroke-dasharray="1.6 2.4"/>
<line x1="2168.7" y1="949.4" x2="2196.5" y2="957.5" stroke-dasharray="1.6 2.4"/>
<line x1="2196.5" y1="957.5" x2="2174.2" y2="992.9" stroke-dasharray="1.6 2.4"/>
<line x1="2174.2" y1="992.9" x2="2146.0" y2="984.6" stroke-dasharray="1.6 2.4"/>
<line x1="2146.0" y1="984.6" x2="2168.7" y2="949.4" stroke-dasharray="1.6 2.4"/>
<line x1="1762.6" y1="409.6" x2="1768.5" y2="403.9" stroke-dasharray="1.6 2.4"/>
<line x1="1768.5" y1="403.9" x2="1773.5" y2="399.1"/>
<line x1="1773.5" y1="399.1" x2="1732.5" y2="389.4"/>
<line x1="1732.5" y1="389.4" x2="1727.0" y2="394.6"/>
<line x1="1727.0" y1="394.6" x2="1721.5" y2="399.8" stroke-dasharray="1.6 2.4"/>
<line x1="1721.5" y1="399.8" x2="1762.6" y2="409.6" stroke-dasharray="1.6 2.4"/>
<line x1="1778.9" y1="393.9" x2="1789.6" y2="383.5"/>
<line x1="1789.6" y1="383.5" x2="1748.9" y2="373.9"/>
<line x1="1748.9" y1="373.9" x2="1738.0" y2="384.2"/>
<line x1="1738.0" y1="384.2" x2="1778.9" y2="393.9"/>
<line x1="1794.9" y1="378.4" x2="1754.3" y2="368.9"/>
<line x1="2038.1" y1="143.1" x2="2046.2" y2="135.3"/>
<line x1="2046.2" y1="135.3" x2="2009.6" y2="128.0"/>
<line x1="2009.6" y1="128.0" x2="2001.4" y2="135.8"/>
<line x1="2001.4" y1="135.8" x2="2038.1" y2="143.1"/>
<line x1="2050.2" y1="131.4" x2="2058.1" y2="123.7"/>
<line x1="2058.1" y1="123.7" x2="2021.8" y2="116.5"/>
<line x1="2021.8" y1="116.5" x2="2013.7" y2="124.2"/>
<line x1="2013.7" y1="124.2" x2="2050.2" y2="131.4"/>
<line x1="2070.0" y1="112.2" x2="2062.1" y2="119.8"/>
<line x1="2062.1" y1="119.8" x2="2048.5" y2="117.2"/>
<line x1="2048.5" y1="117.2" x2="2056.4" y2="109.6"/>
<line x1="2056.4" y1="109.6" x2="2033.8" y2="105.2"/>
<line x1="2033.8" y1="105.2" x2="2025.8" y2="112.7"/>
<line x1="801.5" y1="1312.2" x2="825.1" y2="1289.6"/>
<line x1="856.7" y1="1286.2" x2="803.7" y2="1265.5"/>
<line x1="891.0" y1="1253.0" x2="913.5" y2="1231.3"/>
<line x1="913.5" y1="1231.3" x2="861.1" y2="1211.4"/>
<line x1="861.1" y1="1211.4" x2="838.4" y2="1232.7"/>
<line x1="838.4" y1="1232.7" x2="891.0" y2="1253.0"/>
<line x1="924.6" y1="1220.6" x2="946.5" y2="1199.4"/>
<line x1="946.5" y1="1199.4" x2="894.4" y2="1179.9"/>
<line x1="894.4" y1="1179.9" x2="872.3" y2="1200.8"/>
<line x1="872.3" y1="1200.8" x2="924.6" y2="1220.6"/>
</g>
<g stroke-width="1.1"><line x1="1218.7" y1="1196" x2="1281.2" y2="1213" stroke="#e0222a"/><line x1="1218.7" y1="1196" x2="1247.7" y2="1160.2" stroke="#22d822"/><line x1="1218.7" y1="1196" x2="1218.7" y2="1139.5" stroke="#1414f0"/></g>
<g font-family="Liberation Sans, sans-serif" font-size="11" fill="#222" text-anchor="middle"><text x="1295" y="1220.5">x</text><text x="1253.7" y="1155" transform="rotate(-38 1253.7 1151.5)">y</text><text x="1218.7" y="1132">z</text></g>
</svg>
<div class="abs" style="left:1579px;top:1324px;width:43px;height:41px;background:#cce4f7;border:1px solid #99d1ff;border-radius:4px"></div>
<div class="abs" style="left:1674px;top:1324px;width:43px;height:41px;background:#cce4f7;border:1px solid #99d1ff;border-radius:4px"></div>
<div class="abs" style="left:1717px;top:1324px;width:43px;height:41px;background:#cce4f7;border:1px solid #99d1ff;border-radius:4px"></div>
<svg class="abs" style="left:1041.8px;top:1329.0px" width="32" height="32" viewBox="0 0 32 32" ><g fill="none" stroke="#000" stroke-width="1.7" stroke-dasharray="2.6 1.9"><path d="M15.9 3.4L27.5 9.9V22.5L22 25.6M10 25.8L4.4 22.5V9.9L15.9 3.4"/><path d="M4.4 9.9L15.9 16L27.5 9.9M15.9 16V24"/></g><path d="M10.6 23.2H13.2L16.4 27.3L13.2 31.4H10.6L13.8 27.3ZM15.8 23.2H18.4L21.6 27.3L18.4 31.4H15.8L19 27.3Z" fill="#000" stroke="#000" stroke-width="0.8"/></svg>
<svg class="abs" style="left:1084.2px;top:1329.0px" width="32" height="32" viewBox="0 0 32 32" ><g fill="none" stroke="#000" stroke-width="1.7"><path d="M9.8 25.6L4.5 22.5V9.9L16 3.4L27.4 9.9V22.5L22 25.6"/><path d="M4.5 9.9L16 16L27.4 9.9M16 16V18.4"/></g><path d="M11.4 18.6H20.6M11.2 30.8H20.8" stroke="#000" stroke-width="1.5"/><path d="M12.4 19.6H19.6L16 24.6ZM16 24.6L19.8 30.4H12.2Z" fill="none" stroke="#000" stroke-width="1"/><path d="M13.6 20.4H18.4L16 23.6Z" fill="#000"/></svg>
<svg class="abs" style="left:1134.0px;top:1329.0px" width="32" height="32" viewBox="0 0 32 32" ><circle cx="14.6" cy="12.6" r="8.6" fill="none" stroke="#000" stroke-width="1.5"/><path d="M19.9 21.8L24.6 29.8" stroke="#000" stroke-width="5" stroke-linecap="butt"/><path d="M18.2 19.1L20.6 23.1" stroke="#000" stroke-width="2.2"/><g fill="none" stroke="#000" stroke-width="1.7"><path d="M3.2 5.6V1.4H8.2M21.6 1.4H26.4V5.8M3.2 19.8V24.4H8.2M26.4 19.6V23.6"/></g></svg>
<svg class="abs" style="left:1177.0px;top:1329.0px" width="32" height="32" viewBox="0 0 32 32" ><circle cx="14.7" cy="13.0" r="8.6" fill="none" stroke="#000" stroke-width="1.5"/><path d="M20.0 22.2L24.7 30.2" stroke="#000" stroke-width="5" stroke-linecap="butt"/><path d="M18.3 19.5L20.7 23.5" stroke="#000" stroke-width="2.2"/><path d="M9.6 13H19.8M14.7 7.9V18.1" stroke="#000" stroke-width="1.7"/></svg>
<svg class="abs" style="left:1220.0px;top:1329.0px" width="32" height="32" viewBox="0 0 32 32" ><circle cx="14.8" cy="13.0" r="8.6" fill="none" stroke="#000" stroke-width="1.5"/><path d="M20.1 22.2L24.8 30.2" stroke="#000" stroke-width="5" stroke-linecap="butt"/><path d="M18.4 19.5L20.8 23.5" stroke="#000" stroke-width="2.2"/><path d="M9.7 13H19.9" stroke="#000" stroke-width="1.7"/></svg>
<svg class="abs" style="left:1265.0px;top:1329.0px" width="32" height="32" viewBox="0 0 32 32" ><path d="M5.7 11.1A11.3 11.3 0 1 1 5.7 20.7" fill="none" stroke="#000" stroke-width="1.5"/><path d="M5 6.6L5.4 12.2L10.6 10.2Z" fill="#000"/></svg>
<div class="abs" style="left:1126.0px;top:1327px;width:1px;height:36px;background:#c9c9c9"></div>
<div class="abs" style="left:1306.9px;top:1327px;width:1px;height:36px;background:#c9c9c9"></div>
<div class="abs" style="left:1574.0px;top:1327px;width:1px;height:36px;background:#c9c9c9"></div>
<div class="abs" style="left:1669.0px;top:1327px;width:1px;height:36px;background:#c9c9c9"></div>
<svg class="abs" style="left:1312px;top:1322px" width="260" height="48" viewBox="1312 1322 260 48"><g stroke="#000" stroke-width="1.3" fill="none"><path d="M1330.6 1333.8V1352.4"/><path d="M1321.2 1340.8L1340.0 1345.2"/><path d="M1326.0 1348.0L1335.4 1339.0"/></g><path d="M1336.0 1342.7Q1343.0 1336.5 1350.0 1342.7Q1343.0 1348.9 1336.0 1342.7Z" fill="#000"/><ellipse cx="1343.0" cy="1342.7" rx="2.5" ry="2.3" fill="#f0f0f0"/><text x="1337.0" y="1360.3" font-family="Liberation Sans, sans-serif" font-size="15.6" textLength="12.2" lengthAdjust="spacingAndGlyphs" fill="#000">+X</text><g stroke="#000" stroke-width="1.3" fill="none"><path d="M1373.3 1333.8V1352.4"/><path d="M1363.9 1340.8L1382.7 1345.2"/><path d="M1368.7 1348.0L1378.1 1339.0"/></g><path d="M1358.0 1339.0Q1365.0 1332.8 1372.0 1339.0Q1365.0 1345.2 1358.0 1339.0Z" fill="#000"/><ellipse cx="1365.0" cy="1339.0" rx="2.5" ry="2.3" fill="#f0f0f0"/><text x="1380.8" y="1360.3" font-family="Liberation Sans, sans-serif" font-size="15.6" textLength="12.2" lengthAdjust="spacingAndGlyphs" fill="#000">-X</text><g stroke="#000" stroke-width="1.3" fill="none"><path d="M1416.8 1333.8V1352.4"/><path d="M1407.4 1340.8L1426.2 1345.2"/><path d="M1412.2 1348.0L1421.6 1339.0"/></g><path d="M1418.5 1336.2Q1425.5 1330.0 1432.5 1336.2Q1425.5 1342.4 1418.5 1336.2Z" fill="#000"/><ellipse cx="1425.5" cy="1336.2" rx="2.5" ry="2.3" fill="#f0f0f0"/><text x="1423.3" y="1360.3" font-family="Liberation Sans, sans-serif" font-size="15.6" textLength="12.2" lengthAdjust="spacingAndGlyphs" fill="#000">+Y</text><g stroke="#000" stroke-width="1.3" fill="none"><path d="M1459.6 1333.8V1352.4"/><path d="M1450.2 1340.8L1469.0 1345.2"/><path d="M1455.0 1348.0L1464.4 1339.0"/></g><path d="M1443.6 1351.0Q1450.6 1344.8 1457.6 1351.0Q1450.6 1357.2 1443.6 1351.0Z" fill="#000"/><ellipse cx="1450.6" cy="1351.0" rx="2.5" ry="2.3" fill="#f0f0f0"/><text x="1467.0" y="1360.3" font-family="Liberation Sans, sans-serif" font-size="15.6" textLength="12.2" lengthAdjust="spacingAndGlyphs" fill="#000">-Y</text><g stroke="#000" stroke-width="1.3" fill="none"><path d="M1502.4 1333.8V1352.4"/><path d="M1493.0 1340.8L1511.8 1345.2"/><path d="M1497.8 1348.0L1507.2 1339.0"/></g><path d="M1495.4 1330.7Q1502.4 1324.5 1509.4 1330.7Q1502.4 1336.9 1495.4 1330.7Z" fill="#000"/><ellipse cx="1502.4" cy="1330.7" rx="2.5" ry="2.3" fill="#f0f0f0"/><text x="1509.0" y="1360.3" font-family="Liberation Sans, sans-serif" font-size="15.6" textLength="12.2" lengthAdjust="spacingAndGlyphs" fill="#000">+Z</text><g stroke="#000" stroke-width="1.3" fill="none"><path d="M1545.6 1333.8V1352.4"/><path d="M1536.2 1340.8L1555.0 1345.2"/><path d="M1541.0 1348.0L1550.4 1339.0"/></g><path d="M1538.6 1356.4Q1545.6 1350.2 1552.6 1356.4Q1545.6 1362.6 1538.6 1356.4Z" fill="#000"/><ellipse cx="1545.6" cy="1356.4" rx="2.5" ry="2.3" fill="#f0f0f0"/><text x="1552.0" y="1360.3" font-family="Liberation Sans, sans-serif" font-size="15.6" textLength="12.2" lengthAdjust="spacingAndGlyphs" fill="#000">-Z</text></svg>
<svg class="abs" style="left:1578px;top:1322px" width="230" height="48" viewBox="1578 1322 230 48"><g fill="none" stroke="#000" stroke-width="1.8" stroke-linejoin="round"><path d="M1586.8 1344.6H1602.4V1360H1586.8ZM1586.8 1344.6L1615.4 1332M1602.4 1344.6L1615.4 1332M1602.4 1360L1615.4 1332"/><circle cx="1614.8" cy="1332.6" r="1.4" fill="#000" stroke="none"/><path d="M1630.8 1338.6H1649.6V1357.2H1630.8ZM1637.4 1332.6H1655.6V1350.6H1637.4ZM1630.8 1338.6L1637.4 1332.6M1649.6 1338.6L1655.6 1332.6M1630.8 1357.2L1637.4 1350.6M1649.6 1357.2L1655.6 1350.6" stroke-width="1.6"/></g><g stroke="#000" fill="none"><path d="M1696 1333V1344.5" stroke-width="1.9"/><path d="M1699.5 1345.9H1709" stroke-width="1.9"/><path d="M1694.6 1347.4L1686.8 1355" stroke-width="1.2"/></g><circle cx="1696" cy="1345.9" r="1.5" fill="#000"/><g stroke="#000" fill="none" stroke-width="1.5"><path d="M1738.8 1333V1344"/><path d="M1742 1345.9H1751.6" stroke-width="1.4"/><path d="M1737.4 1347.4L1729 1355.4" stroke-width="1.1"/><path d="M1738.8 1334H1741.4M1738.8 1337H1741.4M1738.8 1340H1741.4M1738.8 1343H1741.4" stroke-width="1.1"/><path d="M1743.5 1345.9V1343.4M1746 1345.9V1343.4M1748.5 1345.9V1343.4M1751 1345.9V1343.4" stroke-width="1"/><path d="M1735.4 1349.4L1733.6 1347.6M1733.4 1351.3L1731.6 1349.5M1731.4 1353.2L1729.6 1351.4" stroke-width="0.9"/></g><circle cx="1738.8" cy="1345.9" r="1.5" fill="#000"/><text x="1741.4" y="1359.4" font-family="Liberation Sans, sans-serif" font-size="13.4" textLength="12" lengthAdjust="spacingAndGlyphs" fill="#000">10</text><g stroke="#000" stroke-width="1.6" fill="none"><path d="M1775 1337.3H1787M1775 1353.1H1787M1770.1 1342.2V1348.2M1791.9 1342.2V1348.2"/></g><circle cx="1770.1" cy="1337.3" r="1.7" fill="#000"/><circle cx="1791.9" cy="1337.3" r="1.7" fill="#000"/><circle cx="1770.1" cy="1353.1" r="1.7" fill="#000"/><circle cx="1791.9" cy="1353.1" r="1.7" fill="#000"/></svg>
<div class="abs dockt" style="left:1034px;top:1375px;width:830px"><span class="ui" style="left:5px">Console</span><svg class="abs" style="left:806px;top:8px" width="13" height="13" viewBox="0 0 13 13"><path d="M1.2 1.2L11.4 11.4M11.4 1.2L1.2 11.4" stroke="#3c3c3c" stroke-width="2.6" fill="none"/></svg></div>
<div class="abs" style="left:1035px;top:1406px;width:828px;height:298px;background:#f0f0f0"></div>
<div class="abs" style="left:1035px;top:1406px;width:803px;height:298px;background:#fff"></div>
<div class="abs tah con" style="top:1407px">Normalized tree has 15 elements!</div>
<div class="abs tah con" style="top:1426px">Compile and preview finished.</div>
<div class="abs tah con" style="top:1445px">Total rendering time: 0:00:00.026</div>
<div class="abs tah con" style="top:1483px">Parsing design (AST generation)...</div>
<div class="abs tah con" style="top:1502px">Compiling design (CSG Tree generation)...</div>
<div class="abs tah con" style="top:1521px">Compiling design (CSG Products generation)...</div>
<div class="abs tah con" style="top:1540px">Geometries in cache: 52</div>
<div class="abs tah con" style="top:1559px">Geometry cache size in bytes: 742240</div>
<div class="abs tah con" style="top:1578px">CGAL Polyhedrons in cache: 0</div>
<div class="abs tah con" style="top:1597px">CGAL cache size in bytes: 0</div>
<div class="abs tah con" style="top:1616px">Compiling design (CSG Products normalization)...</div>
<div class="abs tah con" style="top:1635px">Normalized tree has 15 elements!</div>
<div class="abs tah con" style="top:1654px">Compile and preview finished.</div>
<div class="abs tah con" style="top:1673px">Total rendering time: 0:00:00.054</div>
<div class="abs" style="left:1845px;top:1590px;width:11px;height:87px;background:#8a8a8a"></div>
<div class="abs" style="left:1034px;top:1704px;width:829px;height:1px;background:#7a8a99"></div>
<div class="abs dockt" style="left:1870px;top:1375px;width:1010px"><span class="ui" style="left:5px">Error-Log</span><svg class="abs" style="left:986px;top:8px" width="13" height="13" viewBox="0 0 13 13"><path d="M1.2 1.2L11.4 11.4M11.4 1.2L1.2 11.4" stroke="#3c3c3c" stroke-width="2.6" fill="none"/></svg></div>
<span class="abs tah" style="left:1882.5px;top:1421px;line-height:20px"><u>S</u>how</span>
<div class="abs" style="left:1964px;top:1418px;width:172px;height:25px;background:#fdfdfd;border:1px solid #c8c8c8;border-radius:3px"><span class="abs tah" style="left:3px;top:2px;line-height:20px">All</span><svg class="abs" style="left:148px;top:7px" width="14" height="10" viewBox="0 0 14 10"><path d="M1.5 2.5L7 8L12.5 2.5" fill="none" stroke="#444" stroke-width="1.1"/></svg></div>
<div class="abs" style="left:1883px;top:1452px;width:984px;height:240px;background:#fff;border:1px solid #828790"></div>
<span class="abs ui" style="left:1923.5px;top:1462px;width:200px;margin-left:-100px;text-align:center">Group</span>
<span class="abs ui" style="left:2064.0px;top:1462px;width:200px;margin-left:-100px;text-align:center">File</span>
<span class="abs ui" style="left:2203.5px;top:1462px;width:200px;margin-left:-100px;text-align:center">Line</span>
<span class="abs ui" style="left:2555.0px;top:1462px;width:200px;margin-left:-100px;text-align:center">Info</span>
<div class="abs" style="left:1963px;top:1453px;width:1px;height:37px;background:#e5e5e5"></div>
<div class="abs" style="left:2163px;top:1453px;width:1px;height:37px;background:#e5e5e5"></div>
<div class="abs" style="left:2243px;top:1453px;width:1px;height:37px;background:#e5e5e5"></div>
<span class="abs tah" style="left:2.5px;top:1708px;line-height:20px;font-size:16px">Viewport: translate = [ 62.50 50.00 -4.17 ], rotate = [ 55.00 0.00 25.00 ], distance = 410.82, fov = 22.50 (1846x1257)</span>
<span class="abs tah" style="right:1.5px;top:1708px;line-height:20px;font-size:15.9px">OpenSCAD 2023.09.04 (git )</span>
</body></html>
